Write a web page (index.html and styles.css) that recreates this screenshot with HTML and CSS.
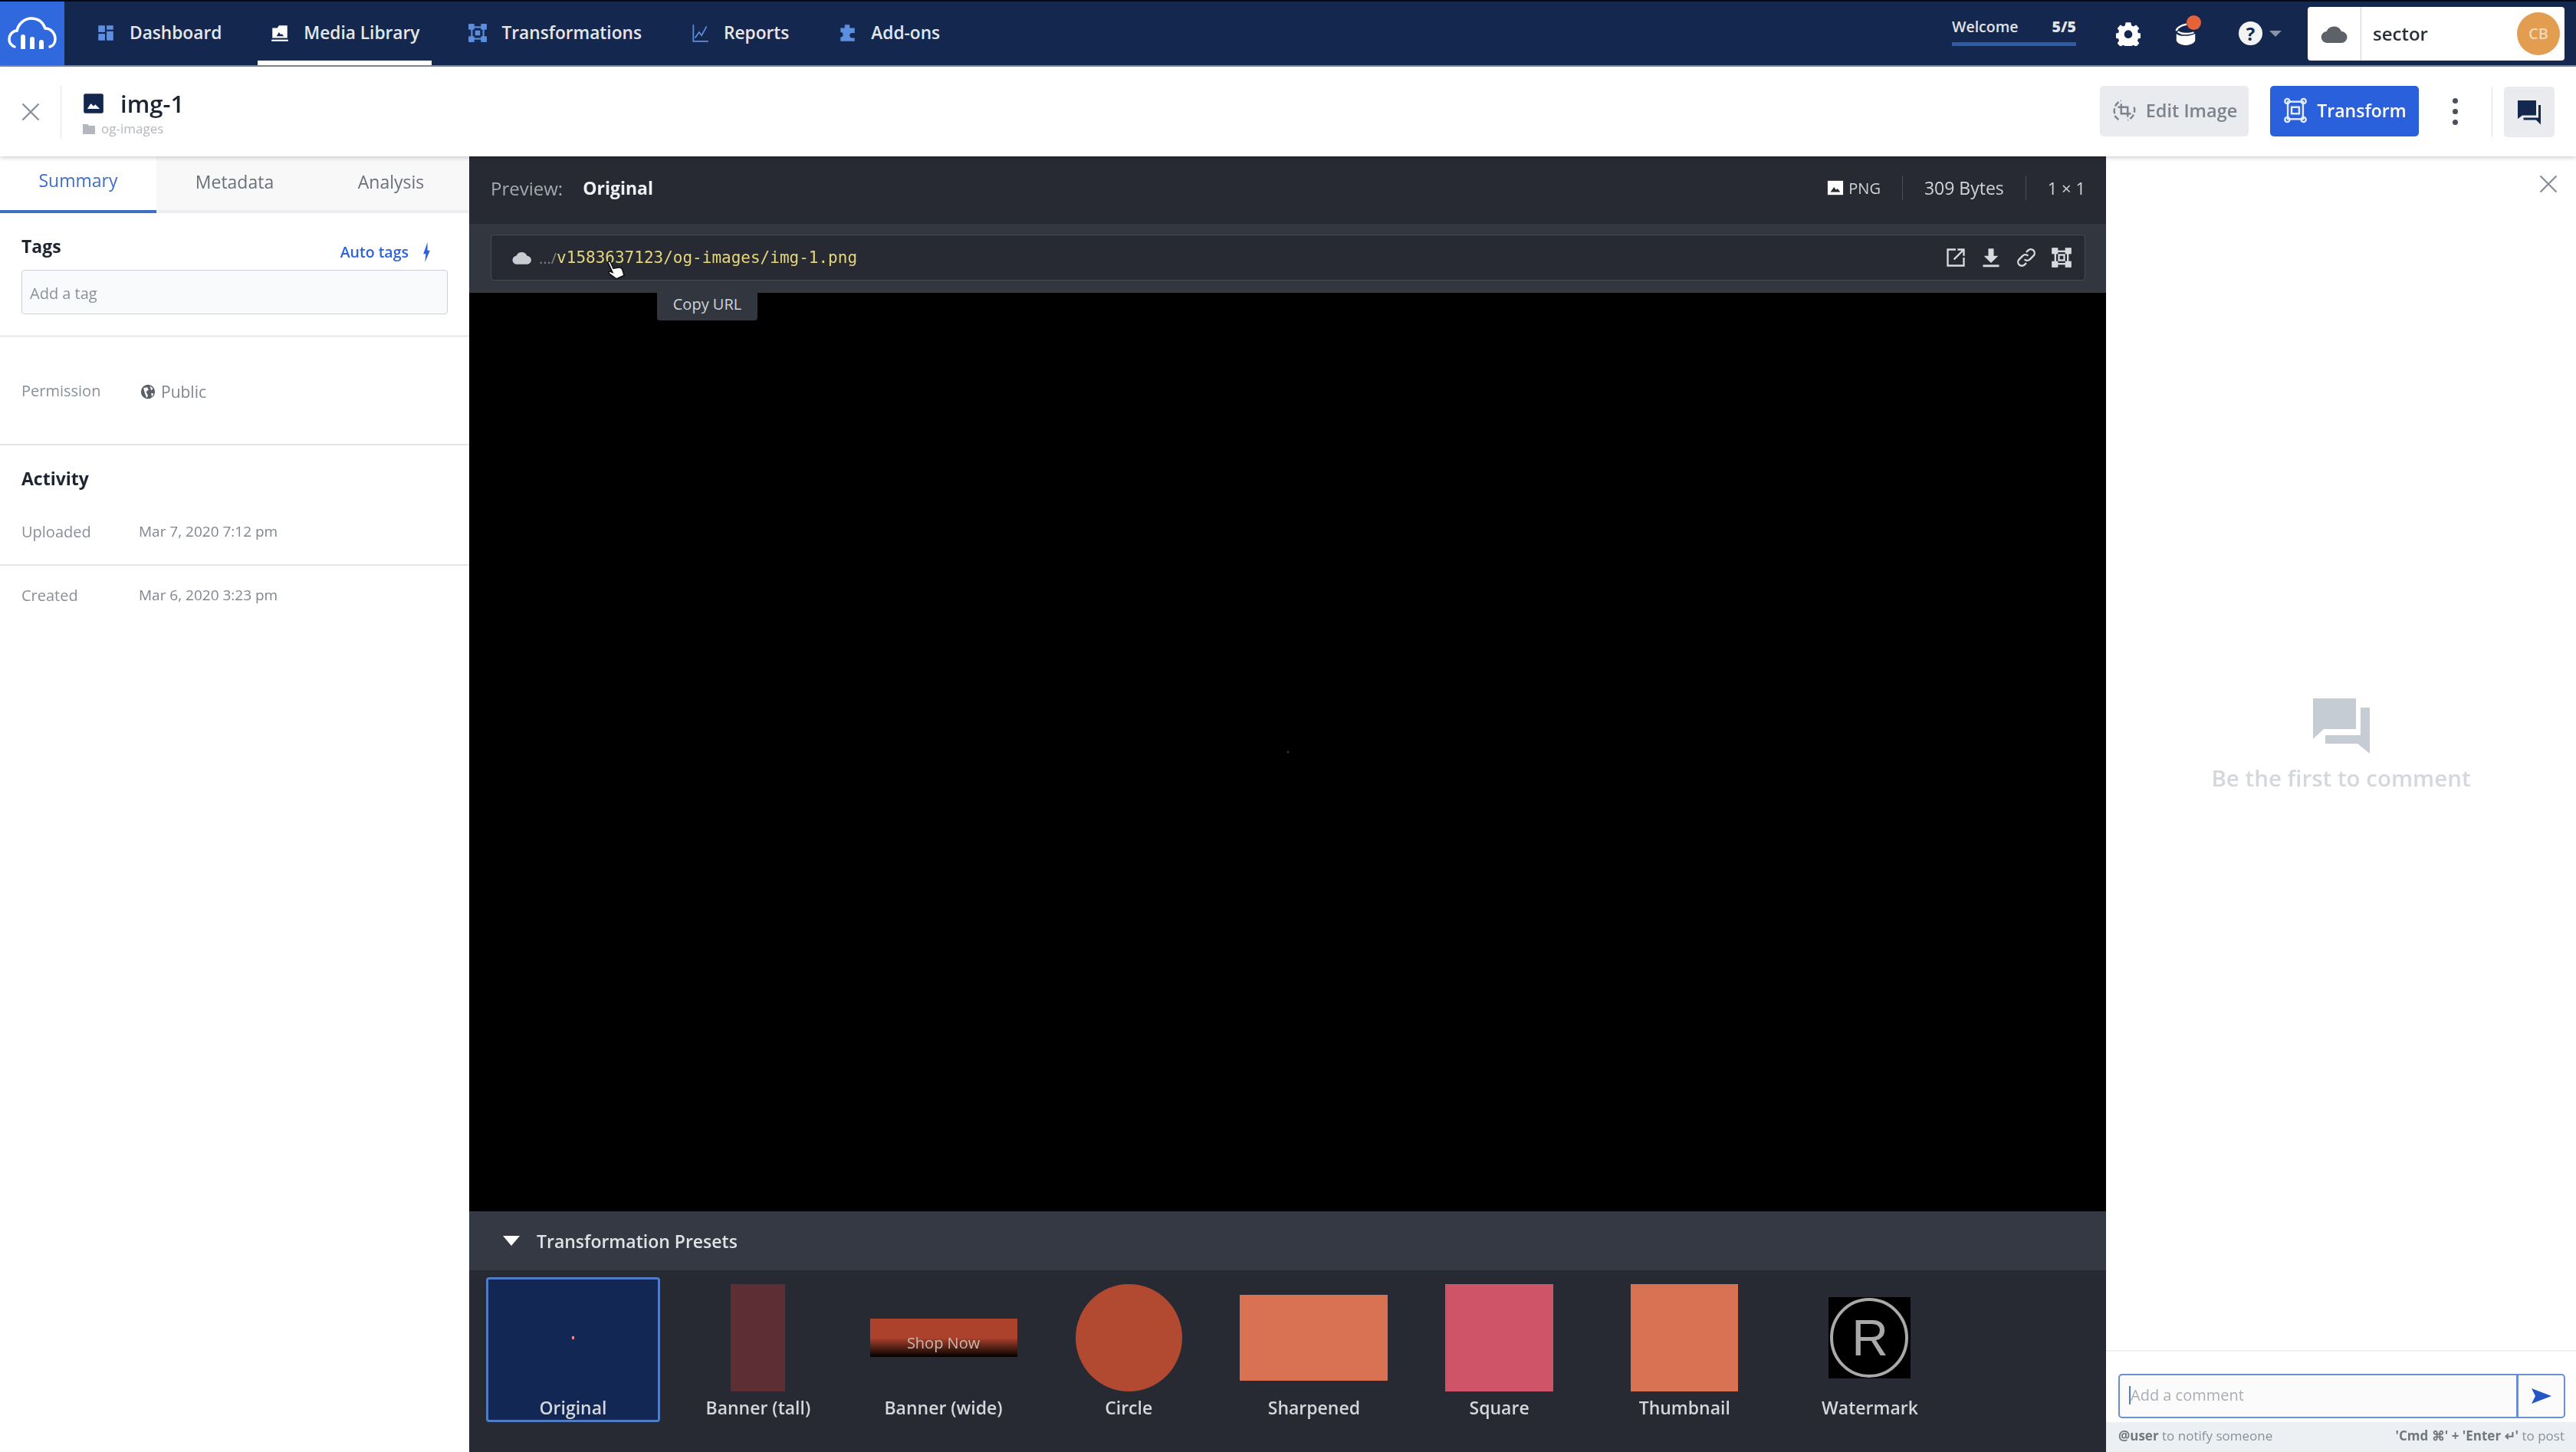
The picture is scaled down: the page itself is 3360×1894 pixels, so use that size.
FILE: index.html

```html
<!DOCTYPE html>
<html lang="en">
<head>
  <meta charset="UTF-8" />
  <title>img-1 - Media Library</title>
  <link rel="stylesheet" href="styles.css">
</head>
<body>
  <header class="topbar">
    <div class="logo">
      <svg viewBox="0 0 64 44" width="64" height="44" fill="none" stroke="#fff" stroke-width="3.500" stroke-linecap="round">
        <path d="M9 39C4 37 2 33 2 29c0-6 5-11 10-11 2-9 10-16 19-16 9 0 15 5 18 13 7 0 13 6 13 14 0 5-3 9-7 10"/>
        <path d="M17 42V26a2.500 2.500 0 0 1 6 0v16zM29 42V29a2.500 2.500 0 0 1 6 0v13zM41 42V33a2.500 2.500 0 0 1 6 0v9z" fill="#fff" stroke="none"/>
      </svg>
    </div>
    <nav class="mainnav">
      <a class="navitem">
        <svg class="navicon" viewBox="0 0 24 24" fill="#5d8fe0"><rect x="3" y="3" width="8" height="8"/><rect x="13" y="3" width="8" height="5"/><rect x="3" y="13" width="8" height="8"/><rect x="13" y="10" width="8" height="11"/></svg>
        Dashboard
      </a>
      <a class="navitem active">
        <svg class="navicon" viewBox="0 0 24 24" fill="#fff"><path d="M3 6h6l2-3h10v15H3z"/><path d="M2 20h20v2H2z"/><path d="M8 16l3-5 2 3 1-1 3 3z" fill="#14274f"/></svg>
        Media Library
      </a>
      <a class="navitem">
        <svg class="navicon" viewBox="0 0 24 24" fill="none" stroke="#5d8fe0" stroke-width="2"><rect x="5" y="5" width="14" height="14"/><rect x="2" y="2" width="5" height="5" fill="#5d8fe0"/><rect x="17" y="2" width="5" height="5" fill="#5d8fe0"/><rect x="2" y="17" width="5" height="5" fill="#5d8fe0"/><rect x="17" y="17" width="5" height="5" fill="#5d8fe0"/><rect x="9" y="9" width="6" height="6" fill="#5d8fe0" stroke="none"/></svg>
        Transformations
      </a>
      <a class="navitem">
        <svg class="navicon" viewBox="0 0 24 24" fill="none" stroke="#5d8fe0" stroke-width="1.600"><path d="M4 2v20h18"/><path d="M6 18l5-7 3 4 6-11"/></svg>
        Reports
      </a>
      <a class="navitem">
        <svg class="navicon" viewBox="0 0 24 24" fill="#5d8fe0"><path d="M9 2h6v4h6v6h-3a3 3 0 0 0 0 6h3v4H4v-5a3 3 0 0 0 0-6V6h5z"/></svg>
        Add-ons
      </a>
    </nav>
    <div class="topright">
      <div class="welcome">
        <div class="welcome-row"><span>Welcome</span><b>5/5</b></div>
        <div class="welcome-bar"></div>
      </div>
      <svg class="topicon gear" viewBox="0 0 24 24" fill="#fff"><path fill-rule="evenodd" d="M9.500 1h5l.6 3 2 .9 2.600-1.600 3 3.400-1.700 2.500.7 2 2.800.6v4.400l-2.800.6-.7 2 1.700 2.500-3 3.400-2.600-1.600-2 .9-.6 3h-5l-.6-3-2-.9-2.600 1.600-3-3.400 1.700-2.500-.7-2-2.800-.6V11.800l2.800-.6.7-2-1.700-2.500 3-3.400 2.600 1.600 2-.9zM12 8.500a4 4 0 1 0 0 8 4 4 0 0 0 0-8z"/></svg>
      <span class="gift">
        <svg class="topicon" viewBox="0 0 30 34" fill="#fff"><path d="M2 17c4 3 7 3 12 3 6 0 10-1 14-3v9c0 4-8 7-13 7S2 30 2 26z"/><path d="M2 13c0-4 7-8 14-9M26 15c-3 2-7 2-12 2-4 0-7-1-10-3" fill="none" stroke="#fff" stroke-width="2.500"/></svg>
        <i class="gift-dot"></i>
      </span>
      <span class="help">
        <span class="help-mark">?</span>
        <i class="caret"></i>
      </span>
      <div class="account">
        <div class="account-cloud">
          <svg viewBox="0 0 24 16" width="36" height="26" fill="#5d6168"><path d="M6 16a5 5 0 0 1-1-10 7 7 0 0 1 13 0 5 5 0 0 1 0 10z"/></svg>
        </div>
        <span class="account-name">sector</span>
        <span class="avatar">CB</span>
      </div>
    </div>
  </header>

  <div class="subbar">
    <button class="closebtn">
      <svg viewBox="0 0 24 24" width="28" height="28" stroke="#8a9099" stroke-width="2" fill="none"><path d="M3 3l18 18M21 3L3 21"/></svg>
    </button>
    <div class="asset">
      <svg class="asset-icon" viewBox="0 0 24 24"><rect x="1" y="1" width="22" height="22" rx="2" fill="#14274f"/><path d="M5 18l4-6 3 3 2-2 5 5z" fill="#fff"/></svg>
      <div>
        <div class="asset-name">img-1</div>
        <div class="asset-folder">
          <svg viewBox="0 0 16 14" width="16" height="14" fill="#b4b8be"><path d="M0 1h6l2 2h8v11H0z"/></svg>
          og-images
        </div>
      </div>
    </div>
    <div class="actions">
      <button class="btn btn-grey">
        <svg viewBox="0 0 24 24" width="34" height="34" fill="none" stroke="#7d838c" stroke-width="1.700"><path d="M9 6v9h9M6 9h9v9"/><path d="M3 15A10 10 0 0 1 9 3M21 9a10 10 0 0 1-6 12M3 17l4 4" stroke-dasharray="5 2"/></svg>
        Edit Image
      </button>
      <button class="btn btn-blue">
        <svg viewBox="0 0 24 24" width="34" height="34" fill="none" stroke="#e4ebfa" stroke-width="1.700"><rect x="5" y="4" width="14" height="16"/><circle cx="4.500" cy="3.500" r="2.200"/><circle cx="19.500" cy="3.500" r="2.200"/><circle cx="4.500" cy="20.500" r="2.200"/><circle cx="19.500" cy="20.500" r="2.200"/><rect x="8.500" y="9" width="7" height="6"/></svg>
        Transform
      </button>
      <span class="dots"><i></i><i></i><i></i></span>
      <span class="vline"></span>
      <button class="btn-comments">
        <svg viewBox="0 0 24 24" width="36" height="36" fill="#14274f"><path d="M2 2h16v13H6l-4 3z"/><path d="M20 6h2v17l-4-4H7v-2h13z"/></svg>
      </button>
    </div>
  </div>

  <main class="workspace">
    <aside class="sidebar">
      <div class="tabs">
        <a class="tab current">Summary</a>
        <a class="tab">Metadata</a>
        <a class="tab">Analysis</a>
      </div>
      <section class="tags">
        <div class="tags-head">
          <h3>Tags</h3>
          <a class="autotags">Auto tags
            <svg viewBox="0 0 10 24" width="11" height="26" fill="#2e62d9"><path d="M6 0L1 14h3l-1 10 6-14H6z"/></svg>
          </a>
        </div>
        <div class="taginput">Add a tag</div>
      </section>
      <section class="permission">
        <span class="label">Permission</span>
        <span class="value public">
          <svg viewBox="0 0 24 24" width="20" height="20"><circle cx="12" cy="12" r="11" fill="#5a6068"/><path d="M5 6l6-1 2 4-4 3 3 6-2 4-3-8zM15 3l5 4-3 3zM17 14l4 1-3 5z" fill="#fff"/></svg>
          Public
        </span>
      </section>
      <section class="activity">
        <h3>Activity</h3>
        <div class="meta-row"><span class="label">Uploaded</span><span class="value">Mar 7, 2020 7:12 pm</span></div>
      </section>
      <section class="created">
        <div class="meta-row"><span class="label">Created</span><span class="value">Mar 6, 2020 3:23 pm</span></div>
      </section>
    </aside>

    <section class="viewer">
      <div class="previewbar">
        <span class="preview-label">Preview:</span>
        <span class="preview-name">Original</span>
        <div class="preview-info">
          <span class="info-cell png">
            <svg viewBox="0 0 24 24" width="22" height="22"><rect x="1" y="2" width="22" height="20" fill="#fff"/><path d="M5 18l5-7 3 4 2-2 4 5z" fill="#272a33"/></svg>
            PNG
          </span>
          <span class="info-cell">309 Bytes</span>
          <span class="info-cell">1 × 1</span>
        </div>
      </div>
      <div class="urlbar">
        <div class="urlbox">
          <svg viewBox="0 0 24 16" width="26" height="18" fill="#c9ccd1"><path d="M6 16a5 5 0 0 1-1-10 7 7 0 0 1 13 0 5 5 0 0 1 0 10z"/></svg>
          <span class="url-dots">.../</span><span class="url-path">v1583637123/og-images/img-1.png</span>
          <svg class="cursor" viewBox="0 0 20 26" width="22" height="29"><path d="M6 2a2 2 0 0 1 3 0v9l7 2c2 1 2 2 2 4l-1 7H7L2 15c-1-2 1-3 2-2l2 2z" fill="#fff" stroke="#111" stroke-width="1.500"/></svg>
          <div class="url-tools">
            <svg viewBox="0 0 24 24" fill="none" stroke="#d8dade" stroke-width="2"><path d="M12 3H3v18h18v-9M10 14L21 3M14 3h7v7"/></svg>
            <svg viewBox="0 0 24 24" fill="#d8dade"><path d="M9 2h6v8h5l-8 8-8-8h5z"/><rect x="3" y="20" width="18" height="2.500"/></svg>
            <svg viewBox="0 0 24 24" fill="none" stroke="#d8dade" stroke-width="2"><path d="M10 14a4 4 0 0 0 6 0l4-4a4 4 0 0 0-6-6l-2 2M14 10a4 4 0 0 0-6 0l-4 4a4 4 0 0 0 6 6l2-2"/></svg>
            <svg viewBox="0 0 24 24" fill="none" stroke="#d8dade" stroke-width="2"><rect x="5" y="5" width="14" height="14"/><rect x="2" y="2" width="5" height="5" fill="#d8dade"/><rect x="17" y="2" width="5" height="5" fill="#d8dade"/><rect x="2" y="17" width="5" height="5" fill="#d8dade"/><rect x="17" y="17" width="5" height="5" fill="#d8dade"/><rect x="9" y="9" width="6" height="6"/></svg>
          </div>
        </div>
        <div class="tooltip">Copy URL</div>
      </div>
      <div class="stage"><i class="pixel"></i></div>
      <div class="presets-head">
        <i class="tri"></i>
        Transformation Presets
      </div>
      <div class="presets">
        <div class="preset selected">
          <div class="thumb"><i class="red-dot"></i></div>
          <span>Original</span>
        </div>
        <div class="preset">
          <div class="thumb"><div class="t-tall"></div></div>
          <span>Banner (tall)</span>
        </div>
        <div class="preset">
          <div class="thumb"><div class="t-wide">Shop Now</div></div>
          <span>Banner (wide)</span>
        </div>
        <div class="preset">
          <div class="thumb"><div class="t-circle"></div></div>
          <span>Circle</span>
        </div>
        <div class="preset">
          <div class="thumb"><div class="t-sharp"></div></div>
          <span>Sharpened</span>
        </div>
        <div class="preset">
          <div class="thumb"><div class="t-square"></div></div>
          <span>Square</span>
        </div>
        <div class="preset">
          <div class="thumb"><div class="t-nail"></div></div>
          <span>Thumbnail</span>
        </div>
        <div class="preset">
          <div class="thumb">
            <div class="t-mark">
              <svg viewBox="0 0 107 106" width="107" height="106" fill="none" stroke="#a9a9a9" stroke-width="4"><ellipse cx="53" cy="53" rx="49" ry="50"/></svg>
              <b>R</b>
            </div>
          </div>
          <span>Watermark</span>
        </div>
      </div>
    </section>

    <aside class="comments">
      <div class="comments-top">
        <svg viewBox="0 0 24 24" width="28" height="28" stroke="#8a9099" stroke-width="2" fill="none"><path d="M3 3l18 18M21 3L3 21"/></svg>
      </div>
      <div class="empty">
        <svg viewBox="0 0 74 72" width="74" height="72" fill="#c5ccd4"><path d="M0 0h56v40H14L0 53z"/><path d="M62 12h12v60L58 59H16V48h46z"/></svg>
        <p>Be the first to comment</p>
      </div>
      <div class="composer">
        <div class="composer-box">
          <div class="composer-input"><i class="caretline"></i>Add a comment</div>
          <button class="send">
            <svg viewBox="0 0 26 20" width="26" height="20" fill="#2456c6"><path d="M0 0l26 10L0 20l5-10z"/></svg>
          </button>
        </div>
        <div class="composer-hint">
          <span><b>@user</b> to notify someone</span>
          <span><b>'Cmd ⌘' + 'Enter ↵'</b> to post</span>
        </div>
      </div>
    </aside>
  </main>
</body>
</html>
```

FILE: styles.css

```css
* {
  box-sizing: border-box;
}

html, body {
  margin: 0;
  height: 100%;
}

body {
  display: flex;
  flex-direction: column;
  height: 1894px;
  overflow: hidden;
  font-family: "Open Sans", "Noto Sans", sans-serif;
  color: #333;
  background: #fff;
  filter: blur(0.6px);
}

button {
  font-family: inherit;
  border: 0;
  padding: 0;
  background: none;
}

h3 {
  margin: 0;
  font-size: 23px;
  font-weight: 700;
  color: #1d2530;
}

/* top navigation */
.topbar {
  display: flex;
  align-items: stretch;
  flex: 0 0 87px;
  background: #14274f;
  border-top: 2px solid #050a14;
  border-bottom: 2px solid #7d8798;
}

.logo {
  display: flex;
  align-items: center;
  justify-content: center;
  width: 84px;
  background: #3068dd;
}

.mainnav {
  display: flex;
  gap: 31px;
  margin-left: 25px;
}

.navitem {
  display: flex;
  align-items: center;
  gap: 18px;
  padding: 0 16px 2px;
  font-size: 22.7px;
  font-weight: 600;
  color: #e4e7ec;
}

.navitem.active {
  box-shadow: inset 0 -6px 0 #fff;
}

.navicon {
  width: 26px;
  height: 26px;
  flex: none;
}

.topright {
  display: flex;
  align-items: center;
  margin-left: auto;
  padding-right: 15px;
}

.welcome {
  width: 162px;
  margin-right: 52px;
  color: #dfe3ea;
  font-size: 19.500px;
  font-weight: 600;
}

.welcome-row {
  display: flex;
  justify-content: space-between;
  line-height: 28px;
  margin-top: -6px;
}

.welcome-bar {
  height: 5px;
  margin-top: 6px;
  background: #2f5aa8;
}

.topicon {
  display: block;
  width: 32px;
  height: 32px;
}

.gift {
  position: relative;
  margin-left: 43px;
}

.gift-dot {
  position: absolute;
  top: -8px;
  right: -4px;
  width: 19px;
  height: 19px;
  border-radius: 50%;
  background: #e4633a;
}

.help {
  display: flex;
  align-items: center;
  gap: 9px;
  margin-left: 53px;
}

.help-mark {
  display: flex;
  align-items: center;
  justify-content: center;
  width: 31px;
  height: 31px;
  border-radius: 50%;
  background: #f2f3f5;
  color: #14274f;
  font-size: 24px;
  font-weight: 700;
}

.caret {
  width: 0;
  height: 0;
  border-left: 8px solid transparent;
  border-right: 8px solid transparent;
  border-top: 8px solid #8693a8;
}

.account {
  display: flex;
  align-items: center;
  width: 335px;
  height: 70px;
  margin-left: 34px;
  background: #fff;
  border-radius: 4px;
}

.account-cloud {
  display: flex;
  align-items: center;
  justify-content: center;
  width: 70px;
  height: 100%;
  border-right: 1px solid #cfd3d9;
}

.account-name {
  margin-left: 15px;
  font-size: 24px;
  font-weight: 600;
  color: #2b2f36;
}

.avatar {
  display: flex;
  align-items: center;
  justify-content: center;
  width: 56px;
  height: 56px;
  margin-left: auto;
  margin-right: 6px;
  border-radius: 50%;
  background: #e39d50;
  color: #f3d9b6;
  font-size: 20px;
  font-weight: 600;
}

/* asset title row */
.subbar {
  display: flex;
  align-items: center;
  flex: 0 0 117px;
  box-shadow: 0 2px 5px rgba(0,0,0,0.18);
  position: relative;
}

.closebtn {
  display: flex;
  align-items: center;
  justify-content: center;
  width: 80px;
  height: 70px;
  border-right: 1px solid #e2e4e8;
}

.asset {
  display: flex;
  gap: 21px;
  margin-left: 28px;
}

.asset-icon {
  width: 28px;
  height: 28px;
  margin-top: 10px;
}

.asset-name {
  font-size: 31px;
  font-weight: 600;
  line-height: 42px;
  margin-top: 3px;
  color: #1d2530;
}

.asset-folder {
  display: flex;
  align-items: center;
  gap: 8px;
  margin-left: -49px;
  font-size: 17px;
  line-height: 24px;
  color: #b4b8be;
}

.actions {
  display: flex;
  align-items: center;
  margin-left: auto;
  padding-right: 28px;
}

.btn {
  display: flex;
  align-items: center;
  justify-content: center;
  gap: 11px;
  width: 194px;
  height: 66px;
  margin-top: -2px;
  padding-bottom: 2px;
  border-radius: 5px;
  font-size: 23.5px;
  font-weight: 600;
}

.btn-grey {
  background: #e9ebef;
  color: #7d838c;
  margin-right: 28px;
}

.btn-blue {
  background: #2b60dc;
  color: #fff;
  font-size: 23px;
}

.dots {
  display: flex;
  flex-direction: column;
  gap: 7px;
  margin-left: 44px;
}

.dots i {
  width: 7px;
  height: 7px;
  border-radius: 50%;
  background: #4a4f58;
}

.vline {
  width: 1px;
  height: 66px;
  margin: 0 15px 0 44px;
  background: #dfe2e6;
}

.btn-comments {
  display: flex;
  align-items: center;
  justify-content: center;
  width: 66px;
  height: 66px;
  border-radius: 5px;
  background: #e9ebef;
}

/* three panes */
.workspace {
  display: flex;
  flex: 1;
  min-height: 0;
}

.sidebar {
  flex: 0 0 612px;
}

.tabs {
  display: flex;
  height: 74px;
  background: #f8f8f9;
  border-bottom: 4px solid #eceef1;
}

.tab {
  flex: 1;
  display: flex;
  align-items: center;
  justify-content: center;
  height: 74px;
  padding-bottom: 9px;
  font-size: 23px;
  color: #6a7079;
}

.tab.current {
  background: #fff;
  color: #3d6fc9;
  border-bottom: 4px solid #3d6fc9;
}

.tags {
  padding: 30px 28px 27px;
  border-bottom: 3px solid #eceef1;
}

.tags-head {
  display: flex;
  justify-content: space-between;
  height: 26px;
  margin-bottom: 18px;
  line-height: 26px;
}

.autotags {
  display: flex;
  align-items: center;
  gap: 18px;
  padding: 16px 22px 0 0;
  font-size: 19.500px;
  font-weight: 600;
  color: #2e62d9;
}

.taginput {
  display: flex;
  align-items: center;
  height: 58px;
  padding: 2px 0 0 10px;
  background: #f9fafb;
  border: 1px solid #ccd0d6;
  border-radius: 4px;
  font-size: 20px;
  color: #8a9099;
}

.label {
  width: 153px;
  flex: none;
  font-size: 20px;
  color: #8a9099;
}

.value {
  display: flex;
  align-items: center;
  gap: 6px;
  font-size: 19px;
  color: #80868f;
}

.value.public {
  gap: 7px;
  padding: 2px 0 0 2px;
  font-size: 21px;
}

.permission {
  display: flex;
  align-items: center;
  height: 141px;
  padding: 0 28px;
  border-bottom: 2px solid #e4e6ea;
}

.activity {
  padding: 28px;
  border-bottom: 2px solid #e4e6ea;
}

.activity h3 {
  line-height: 30px;
}

.meta-row {
  display: flex;
  align-items: center;
  height: 30px;
  margin-top: 39px;
}

.created {
  padding: 23px 28px 0;
}

.created .meta-row {
  margin-top: 0;
}

/* dark viewer */
.viewer {
  display: flex;
  flex-direction: column;
  flex: 0 0 2135px;
  background: #000;
}

.previewbar {
  display: flex;
  align-items: center;
  flex: 0 0 88px;
  padding: 0 27px 6px 28px;
  background: #272a33;
  font-size: 24px;
}

.preview-label {
  color: #a5a9b0;
}

.preview-name {
  margin-left: 26px;
  font-size: 23px;
  font-weight: 700;
  color: #f0f1f3;
}

.preview-info {
  display: flex;
  align-items: center;
  margin-left: auto;
  font-size: 23px;
  color: #d0d3d8;
}

.info-cell {
  display: flex;
  align-items: center;
  gap: 6px;
  height: 32px;
  padding: 0 28px;
  border-left: 1px solid #4a4e58;
}

.info-cell.png {
  border-left: 0;
  font-size: 20px;
}

.info-cell:last-child {
  padding-right: 0;
  font-size: 22px;
}

.urlbar {
  position: relative;
  flex: 0 0 90px;
  padding: 14px 27px 16px 28px;
  background: #32363f;
}

.urlbox {
  position: relative;
  display: flex;
  align-items: center;
  height: 60px;
  padding-left: 27px;
  background: #272a33;
  border: 1px solid #454a54;
  border-radius: 4px;
}

.url-dots {
  margin-left: 9px;
  font-size: 20px;
  color: #7d828a;
}

.url-path {
  font-family: "DejaVu Sans Mono", monospace;
  font-size: 21px;
  color: #e5d67a;
}

.cursor {
  position: absolute;
  left: 150px;
  top: 30px;
  transform: rotate(-25deg);
}

.url-tools {
  display: flex;
  gap: 18px;
  margin-left: auto;
  padding-right: 16px;
}

.url-tools svg {
  width: 28px;
  height: 28px;
}

.tooltip {
  position: absolute;
  left: 245px;
  top: 90px;
  width: 131px;
  height: 36px;
  line-height: 30px;
  text-align: center;
  background: #32363f;
  border-radius: 0 0 4px 4px;
  color: #d0d3d8;
  font-size: 20px;
  z-index: 2;
}

.stage {
  flex: 1;
  display: flex;
  align-items: center;
  justify-content: center;
}

.pixel {
  width: 2px;
  height: 2px;
  background: #444;
}

.presets-head {
  display: flex;
  align-items: center;
  gap: 22px;
  flex: 0 0 77px;
  padding-left: 44px;
  background: #353943;
  font-size: 23px;
  font-weight: 600;
  color: #e0e2e6;
}

.tri {
  width: 0;
  height: 0;
  border-left: 11px solid transparent;
  border-right: 11px solid transparent;
  border-top: 13px solid #fff;
}

.presets {
  display: flex;
  flex: 0 0 237px;
  padding: 9px 0 0 15px;
  background: #272a33;
}

.preset {
  flex: 0 0 241.7px;
  display: flex;
  flex-direction: column;
  align-items: center;
  padding-top: 9px;
  font-size: 23px;
  font-weight: 600;
  color: #d4d6da;
}

.preset.selected {
  flex: 0 0 227px;
  height: 189px;
  margin: 0 7px;
  background: #122754;
  border: 3px solid #4f7cc4;
  border-radius: 4px;
  padding-top: 6px;
}

.thumb {
  display: flex;
  align-items: center;
  justify-content: center;
  height: 140px;
  margin-bottom: 5px;
}

.red-dot {
  width: 3px;
  height: 4px;
  background: #e88a8a;
}

.t-tall {
  width: 71px;
  height: 140px;
  background: #5e2e35;
}

.t-wide {
  display: flex;
  align-items: flex-end;
  justify-content: center;
  width: 192px;
  height: 50px;
  padding-bottom: 5px;
  background: linear-gradient(#ad422c 50%, #000);
  font-size: 20px;
  font-weight: 400;
  color: #c9b8b0;
}

.t-circle {
  width: 139px;
  height: 140px;
  border-radius: 50%;
  background: #b24a32;
}

.t-sharp {
  width: 193px;
  height: 112px;
  background: #d97253;
}

.t-square {
  width: 141px;
  height: 140px;
  background: #cf5468;
}

.t-nail {
  width: 140px;
  height: 140px;
  background: #d97253;
}

.t-mark {
  position: relative;
  width: 107px;
  height: 106px;
  background: #000;
}

.t-mark b {
  position: absolute;
  inset: 0;
  display: flex;
  align-items: center;
  justify-content: center;
  font-family: "Liberation Sans", sans-serif;
  font-size: 66px;
  font-weight: 400;
  color: #a9a9a9;
}

/* comments pane */
.comments {
  display: flex;
  flex-direction: column;
  flex: 1;
}

.comments-top {
  display: flex;
  justify-content: flex-end;
  padding: 22px 22px 0 0;
}

.empty {
  display: flex;
  flex-direction: column;
  align-items: center;
  margin-top: 657px;
}

.empty p {
  margin: 11px 0 0;
  font-size: 29.500px;
  font-weight: 600;
  color: #d4d8de;
}

.composer {
  margin-top: auto;
  border-top: 2px solid #eef0f2;
}

.composer-box {
  display: flex;
  height: 58px;
  margin: 29px 14px 5px 16px;
  border: 2px solid #6d8fcf;
  border-radius: 5px;
  background: #fbfbfc;
}

.composer-input {
  display: flex;
  align-items: center;
  flex: 1;
  padding: 0 0 3px 12px;
  font-size: 20px;
  color: #a9aeb5;
}

.caretline {
  width: 2px;
  height: 24px;
  background: #4f7cc4;
}

.send {
  display: flex;
  align-items: center;
  justify-content: center;
  width: 62px;
  border-left: 3px solid #6d8fcf;
}

.composer-hint {
  display: flex;
  justify-content: space-between;
  height: 39px;
  padding: 6px 15px 0 16px;
  background: #edf0f3;
  font-size: 17px;
  color: #8a9099;
}

.composer-hint b {
  font-weight: 700;
  color: #73787f;
}
```
